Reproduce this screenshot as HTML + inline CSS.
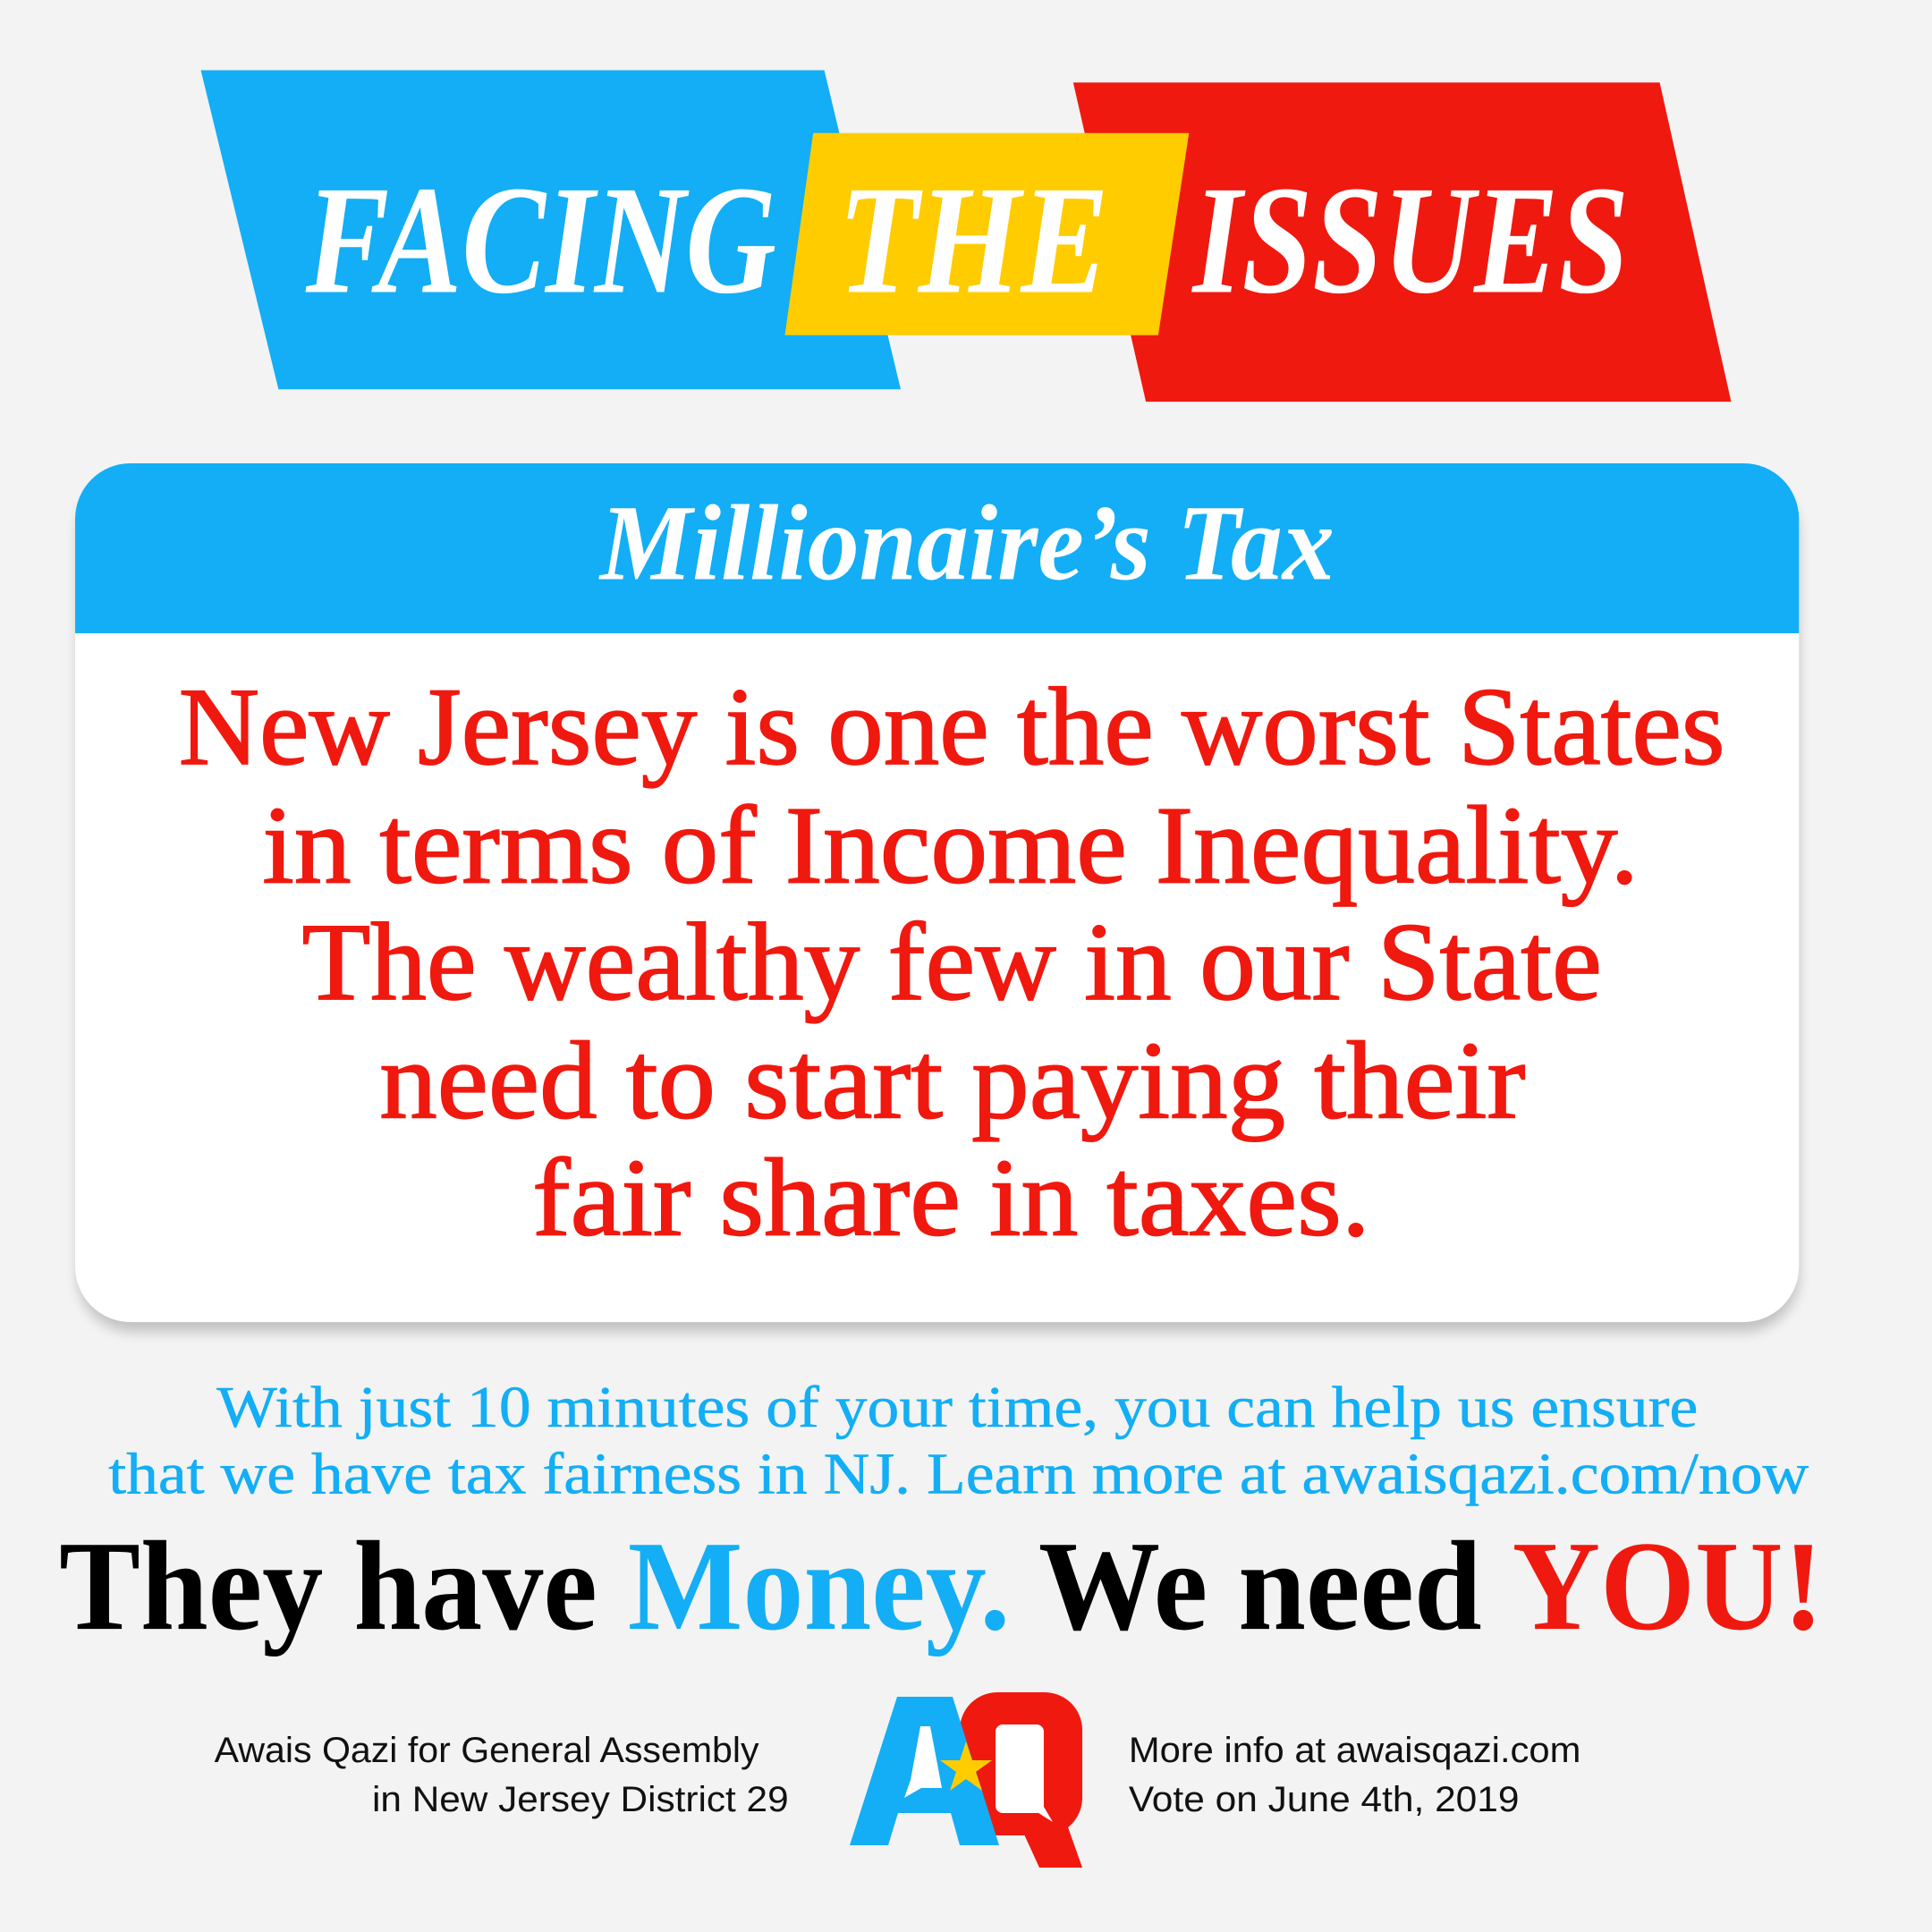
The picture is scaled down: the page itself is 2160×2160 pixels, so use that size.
<!DOCTYPE html>
<html><head><meta charset="utf-8"><style>html,body{margin:0;padding:0;background:#f3f3f3;width:2160px;height:2160px;overflow:hidden}</style></head>
<body>
<svg width="2160" height="2160" viewBox="0 0 1568 1568" xmlns="http://www.w3.org/2000/svg">
<defs><filter id="sh" x="-5%" y="-5%" width="110%" height="115%"><feGaussianBlur stdDeviation="5"/></filter></defs>
<rect width="1568" height="1568" fill="#f3f3f3"/>
<polygon points="163,57 669,57 731,316 226,316" fill="#13aef5"/>
<polygon points="871,67 1347,67 1405,326 930,326" fill="#f0190f"/>
<polygon points="660,108 965,108 940,272 637,272" fill="#ffcc00"/>
<g font-family="Liberation Serif, serif" font-weight="bold" font-style="italic" fill="#fff" font-size="126">
<text x="248" y="237" textLength="382" lengthAdjust="spacingAndGlyphs">FACING</text>
<text x="680" y="237" textLength="220" lengthAdjust="spacingAndGlyphs">THE</text>
<text x="968" y="237" textLength="354" lengthAdjust="spacingAndGlyphs">ISSUES</text>
</g>
<rect x="63" y="388" width="1397" height="693" rx="45" fill="#000" opacity="0.2" filter="url(#sh)"/>
<rect x="61" y="376" width="1399" height="697" rx="45" fill="#fff"/>
<path d="M61,421 a45,45 0 0 1 45,-45 h1309 a45,45 0 0 1 45,45 v93 h-1399 z" fill="#13aef5"/>
<text x="487" y="470" textLength="596" lengthAdjust="spacingAndGlyphs" font-family="Liberation Serif, serif" font-weight="bold" font-style="italic" font-size="88" fill="#fff">Millionaire’s Tax</text>
<g font-family="Liberation Serif, serif" font-size="90" fill="#f0190f" stroke="#f0190f" stroke-width="1.2">
<text x="145" y="620" textLength="1255" lengthAdjust="spacingAndGlyphs">New Jersey is one the worst States</text>
<text x="213" y="716" textLength="1117" lengthAdjust="spacingAndGlyphs">in terms of Income Inequality.</text>
<text x="245" y="811" textLength="1055" lengthAdjust="spacingAndGlyphs">The wealthy few in our State</text>
<text x="308" y="907" textLength="930" lengthAdjust="spacingAndGlyphs">need to start paying their</text>
<text x="432" y="1002" textLength="680" lengthAdjust="spacingAndGlyphs">fair share in taxes.</text>
</g>
<g font-family="Liberation Serif, serif" font-size="48" fill="#13aef5" stroke="#13aef5" stroke-width="0.4">
<text x="176" y="1158" textLength="1202" lengthAdjust="spacingAndGlyphs">With just 10 minutes of your time, you can help us ensure</text>
<text x="88" y="1212" textLength="1380" lengthAdjust="spacingAndGlyphs">that we have tax fairness in NJ. Learn more at awaisqazi.com/now</text>
</g>
<text x="48" y="1322" textLength="1432" lengthAdjust="spacingAndGlyphs" font-family="Liberation Serif, serif" font-weight="bold" font-size="104" fill="#000">They have <tspan fill="#13aef5">Money.</tspan> We need <tspan fill="#f0190f">YOU!</tspan></text>
<g font-family="Liberation Sans, sans-serif" font-size="29" fill="#111">
<text x="616" y="1430" text-anchor="end" textLength="442" lengthAdjust="spacingAndGlyphs">Awais Qazi for General Assembly</text>
<text x="640" y="1470" text-anchor="end" textLength="338" lengthAdjust="spacingAndGlyphs">in New Jersey District 29</text>
<text x="916" y="1430" textLength="367" lengthAdjust="spacingAndGlyphs">More info at awaisqazi.com</text>
<text x="916" y="1470" textLength="317" lengthAdjust="spacingAndGlyphs">Vote on June 4th, 2019</text>
</g>
<g transform="scale(0.72593)">
<rect x="1073" y="1892" width="137" height="160" rx="42" fill="#f0190f"/>
<polygon points="1140,2040 1193,2040 1210,2088 1162,2088" fill="#f0190f"/>
<rect x="1113" y="1928" width="54" height="99" rx="8" fill="#fff"/>
<polygon points="1150,2020 1167,2020 1177,2037" fill="#fff"/>
<polygon points="1003,1897 1065,1897 1117,2063 1073,2063 1063,2027 1004,2027 993,2063 950,2063" fill="#13aef5"/>
<polygon points="1029,1930 1040,1930 1053,1999 1030,1999 1011,2010 1018,1990" fill="#fff"/>
<polygon points="1080,1947 1087,1968 1109,1968 1091,1981 1098,2002 1080,1989 1062,2002 1069,1981 1051,1968 1073,1968" fill="#ffcc00"/>
</g>
</svg>
</body></html>
